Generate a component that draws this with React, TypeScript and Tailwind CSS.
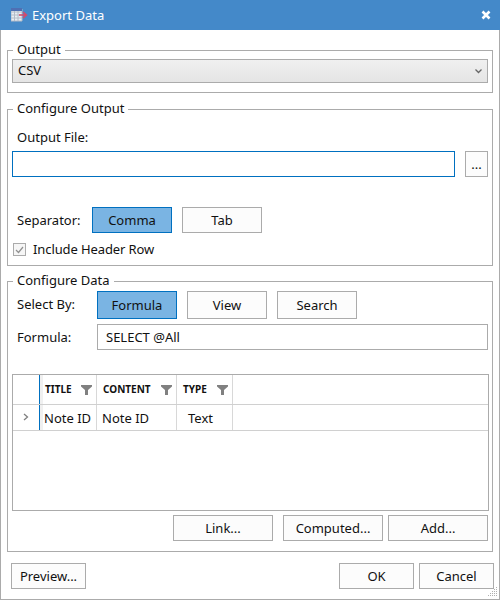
import React from "react";

const Btn = ({ label, w, active, cls = "" }: { label: string; w: string; active?: boolean; cls?: string }) => (
  <button
    className={`${w} ${cls} flex items-center justify-center border text-[13px] leading-none text-[#111] ${
      active ? "border-[#0070c0] bg-[#7ab4e3]" : "border-[#ababab] bg-[#fcfcfc]"
    }`}
  >
    {label}
  </button>
);

const Funnel = () => (
  <svg width="11" height="10" viewBox="0 0 11 10" className="shrink-0">
    <path d="M0 0H11V1.5L7 5V10H4V5L0 1.5Z" fill="#808080" />
  </svg>
);

const Group = ({ title, cls = "", children }: { title: string; cls?: string; children: React.ReactNode }) => (
  <fieldset className={`mx-[6px] min-w-0 border border-[#ababab] px-[4px] ${cls}`}>
    <legend className="ml-px h-[18px] px-[4px] text-[13px] leading-[16px] text-[#111]">{title}</legend>
    {children}
  </fieldset>
);

export default function App() {
  return (
    <div
      className="relative flex h-[600px] w-[500px] flex-col border-x border-b border-[#ababab] bg-white text-[13px] text-[#111]"
      style={{ fontFamily: '"Noto Sans", "Open Sans", sans-serif' }}
    >
      <div className="-mx-px flex h-[30px] shrink-0 items-center bg-[#4489c9] pl-[11px] pr-[9px] text-white">
        <svg width="17" height="14" viewBox="0 0 17 14" className="mr-[4px]">
          <rect x="0" y="1" width="11" height="12" fill="#e8edf3" />
          <path d="M0 1H11M0 4H11M0 7H11M0 10H11M0 13H11M0 1V13M3.5 1V13M7 1V13M11 1V13" stroke="#b4bcc8" strokeWidth="1" fill="none" />
          <rect x="0" y="0" width="11" height="3" fill="#4f6fb3" />
          <path d="M8 7H15M12 4L15.5 7L12 10" stroke="#d8486a" strokeWidth="1.5" fill="none" />
        </svg>
        <span className="pt-px text-[13px]">Export Data</span>
        <svg width="10" height="10" viewBox="0 0 10 10" className="ml-auto">
          <path d="M1.5 1.5L8.5 8.5M8.5 1.5L1.5 8.5" stroke="#fff" strokeWidth="2.6" />
        </svg>
      </div>

      <Group title="Output" cls="mt-[11px] pb-[9px]">
        <div className="flex h-[24px] items-center justify-between border border-[#ababab] bg-linear-to-b from-[#f0f0f0] to-[#e5e5e5] pl-[5px] pr-[5px]">
          <span>CSV</span>
          <svg width="7" height="5" viewBox="0 0 7 5">
            <path d="M0.5 0.5L3.5 3.5L6.5 0.5" stroke="#666" strokeWidth="1.3" fill="none" />
          </svg>
        </div>
      </Group>

      <Group title="Configure Output" cls="mt-[7px] h-[166px]">
        <div className="mt-[10px] ml-[5px] h-[23px] leading-[18px]">Output File:</div>
        <div className="flex">
          <div className="h-[26px] w-[443px] border border-[#0070c0] bg-white" />
          <Btn label="..." w="w-[23px]" cls="ml-[10px] h-[26px]" />
        </div>
        <div className="mt-[30px] flex items-center">
          <span className="w-[80px] pl-[5px] pt-[2px]">Separator:</span>
          <Btn label="Comma" w="w-[80px]" active cls="h-[26px]" />
          <Btn label="Tab" w="w-[80px]" cls="ml-[10px] h-[26px]" />
        </div>
        <div className="mt-[7px] flex items-center">
          <span className="ml-[1px] flex size-[13px] items-center justify-center border border-[#ababab] bg-[#f6f6f6]">
            <svg width="9" height="8" viewBox="0 0 9 8">
              <path d="M1 4L3.5 6.5L8 1" stroke="#909090" strokeWidth="1.2" fill="none" />
            </svg>
          </span>
          <span className="ml-[7px] tracking-[-0.1px]">Include Header Row</span>
        </div>
      </Group>

      <Group title="Configure Data" cls="mt-[6px] h-[280px]">
        <div className="mt-px flex h-[28px] items-center">
          <span className="w-[85px] pl-[5px]">Select By:</span>
          <Btn label="Formula" w="w-[80px]" active cls="h-[28px] pt-px" />
          <Btn label="View" w="w-[80px]" cls="ml-[10px] h-[28px] pt-px" />
          <Btn label="Search" w="w-[80px]" cls="ml-[10px] h-[28px] pt-px" />
        </div>
        <div className="mt-[5px] flex h-[26px] items-center">
          <span className="w-[85px] pl-[5px] pt-px">Formula:</span>
          <div className="flex h-[26px] w-[391px] items-center border border-[#ababab] bg-white pl-[8px] pt-px">SELECT @All</div>
        </div>

        <div className="mt-[24px] flex h-[137px] w-[477px] flex-col border border-[#ababab] bg-white">
          <div className="flex h-[30px] border-b border-[#d0d0d0]">
            <div className="w-[27px] border-r border-[#0070c0]" />
            <div className="flex w-[57px] items-center justify-between border-l-[3px] border-r border-l-[#f0f0f0] border-r-[#d8d8d8] pl-[2px] pr-[4px] text-[10px] font-bold">
              <span>TITLE</span>
              <Funnel />
            </div>
            <div className="flex w-[80px] items-center justify-between border-r border-[#d8d8d8] pl-[6px] pr-[4px] text-[10px] font-bold">
              <span>CONTENT</span>
              <Funnel />
            </div>
            <div className="flex w-[56px] items-center justify-between border-r border-[#d8d8d8] pl-[6px] pr-[4px] text-[10px] font-bold">
              <span>TYPE</span>
              <Funnel />
            </div>
          </div>
          <div className="flex h-[26px] border-b border-[#d0d0d0]">
            <div className="flex w-[27px] items-center justify-center border-r border-[#0070c0] pb-[2px]">
              <svg width="6" height="8" viewBox="0 0 6 8">
                <path d="M1 1L4.5 4L1 7" stroke="#808080" strokeWidth="1.3" fill="none" />
              </svg>
            </div>
            <div className="flex w-[57px] items-center border-l-[3px] border-r border-l-[#f0f0f0] border-r-[#d8d8d8] pl-[1px] pt-[2px]">Note ID</div>
            <div className="flex w-[80px] items-center border-r border-[#d8d8d8] pl-[5px] pt-[2px]">Note ID</div>
            <div className="flex w-[56px] items-center border-r border-[#d8d8d8] pl-[11px] pt-[2px]">Text</div>
          </div>
        </div>

        <div className="mt-[4px] flex justify-end">
          <Btn label="Link..." w="w-[100px]" cls="h-[26px] pt-px" />
          <Btn label="Computed..." w="w-[100px]" cls="ml-[10px] h-[26px] pt-px" />
          <Btn label="Add..." w="w-[100px]" cls="ml-[5px] h-[26px] pt-px" />
        </div>
      </Group>

      <div className="mt-[11px] flex pl-[10px] pr-[5px]">
        <Btn label="Preview..." w="w-[75px]" cls="h-[26px]" />
        <Btn label="OK" w="w-[75px]" cls="ml-auto h-[26px]" />
        <Btn label="Cancel" w="w-[75px]" cls="ml-[5px] h-[26px]" />
      </div>

      <svg width="12" height="12" viewBox="0 0 12 12" className="absolute right-[1px] bottom-[1px]">
        <path d="M10 1h1v1h-1zM8 3h1v1H8zM10 3h1v1h-1zM6 5h1v1H6zM8 5h1v1H8zM10 5h1v1h-1zM4 7h1v1H4zM6 7h1v1H6zM8 7h1v1H8zM10 7h1v1h-1zM2 9h1v1H2zM4 9h1v1H4zM6 9h1v1H6zM8 9h1v1H8zM10 9h1v1h-1z" fill="#b0b0b0" />
      </svg>
    </div>
  );
}
